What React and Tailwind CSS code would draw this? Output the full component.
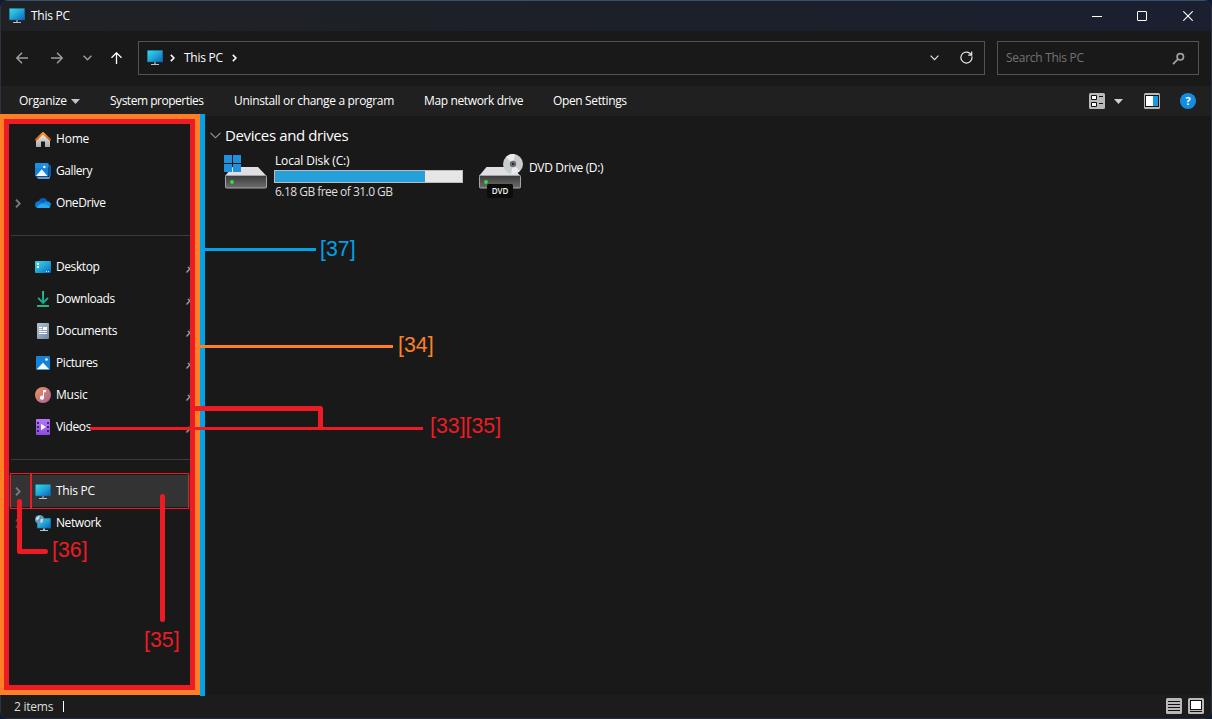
import React from 'react';

function MonitorIcon({ className = '' }) {
  return (
    <svg width="16" height="16" viewBox="0 0 16 16" className={`shrink-0 ${className}`}>
      <defs>
        <linearGradient id="screen" x1="0" y1="0" x2="1" y2="1">
          <stop offset="0" stopColor="#37dbe6" />
          <stop offset="0.5" stopColor="#22a6d6" />
          <stop offset="1" stopColor="#0a66c2" />
        </linearGradient>
      </defs>
      <rect x="7" y="12" width="2" height="2" fill="#7d8a93" />
      <rect x="4" y="14" width="8" height="1" fill="#b9c2c9" />
      <rect x="0" y="0" width="16" height="12.3" rx="0.6" fill="#145f86" />
      <rect x="0.7" y="0.7" width="14.6" height="11" fill="url(#screen)" />
    </svg>
  );
}

function HomeIcon() {
  return (
    <svg width="16" height="16" viewBox="0 0 16 16" className="shrink-0">
      <defs>
        <linearGradient id="wall" x1="0" y1="0" x2="0" y2="1">
          <stop offset="0" stopColor="#eeeeee" />
          <stop offset="1" stopColor="#a9a9a9" />
        </linearGradient>
        <linearGradient id="roof" x1="0" y1="0" x2="0" y2="1">
          <stop offset="0" stopColor="#ff9a1f" />
          <stop offset="1" stopColor="#d9560c" />
        </linearGradient>
      </defs>
      <path d="M1 8 8 2l7 6v8H10v-5.500H6V16H1z" fill="url(#wall)" />
      <path d="M1 8.700 8 2l7 6.700" fill="none" stroke="url(#roof)" strokeWidth="2.100" strokeLinecap="round" strokeLinejoin="round" />
    </svg>
  );
}

function GalleryIcon() {
  return (
    <svg width="16" height="16" viewBox="0 0 16 16" className="shrink-0">
      <path d="M14 2h1.200q.8 0 .8.8V12q0 2-2 2V2z" fill="#0c5cad" />
      <path d="M2 14h12v-1l1 1q0 2-1.500 2H4q-2 0-2-2z" fill="#5f9ad8" />
      <rect x="0" y="0" width="13.500" height="13.500" rx="1.200" fill="#1483d6" />
      <rect x="0" y="0" width="13.500" height="5" rx="1.200" fill="#1a90e2" />
      <path d="M1 13 6.700 6.300 12.500 13z" fill="#f3f8fd" />
      <circle cx="9.300" cy="4" r="1.200" fill="#fff" />
    </svg>
  );
}

function OneDriveIcon() {
  return (
    <svg width="16" height="16" viewBox="0 0 16 16" className="shrink-0">
      <path d="M3.500 7C4.200 4 6 3 8 3c2.500 0 4 1.500 4.500 4L8 10z" fill="#0a5fb4" />
      <path d="M3.500 6.200C1.200 6.300 0 8 0 9.700 0 12 1.500 13 3.500 13H8L9 8.500C7 6.800 5.500 6.200 3.500 6.200z" fill="#0f78d4" />
      <path d="M12.500 6.500c2 .2 3.500 1.600 3.500 3.500l-3 2-5-3.800c1.200-1.200 2.500-1.800 4.500-1.700z" fill="#1490df" />
      <path d="M1.500 12.300C3 10 6 8.500 8.500 8.300L15.500 11.500C15 12.500 14.200 13 13 13H3.500q-1.200 0-2-.7z" fill="#2aa8ec" />
    </svg>
  );
}

function DesktopIcon() {
  return (
    <svg width="16" height="16" viewBox="0 0 16 16" className="shrink-0">
      <rect x="0" y="2" width="16" height="12" rx="1" fill="url(#screen)" />
      <path d="M2 4h2v2H2zM2 7h2v2H2z" fill="#fff" />
      <path d="M11 12h1v1h-1zM13 12h1v1h-1z" fill="#cfe8f7" />
    </svg>
  );
}

function DownloadIcon() {
  return (
    <svg width="16" height="16" viewBox="0 0 16 16" className="shrink-0">
      <defs>
        <linearGradient id="down" x1="0" y1="0" x2="0" y2="1">
          <stop offset="0" stopColor="#2bc486" />
          <stop offset="1" stopColor="#14a398" />
        </linearGradient>
      </defs>
      <path d="M7.100 0h1.900v9.600l3.300-3.300 1.300 1.300L8.050 13.200 2.500 7.600l1.300-1.300 3.300 3.300z" fill="url(#down)" />
      <rect x="2" y="14" width="12" height="2" rx="0.500" fill="#1fb688" />
    </svg>
  );
}

function DocumentIcon() {
  return (
    <svg width="16" height="16" viewBox="0 0 16 16" className="shrink-0">
      <defs>
        <linearGradient id="page" x1="0" y1="0" x2="1" y2="1">
          <stop offset="0" stopColor="#b4c3d4" />
          <stop offset="1" stopColor="#6f87a3" />
        </linearGradient>
      </defs>
      <rect x="2" y="0" width="12" height="16" rx="1" fill="url(#page)" />
      <path d="M4 4h3v1H4zM4 6h3v1H4zM8 4h4v3H8zM4 8h8v1H4zM4 10h8v1H4z" fill="#fff" />
    </svg>
  );
}

function PictureIcon() {
  return (
    <svg width="16" height="16" viewBox="0 0 16 16" className="shrink-0">
      <rect x="1" y="1" width="14" height="14" rx="1" fill="#1482d8" />
      <path d="M1.800 14.200 8 7.800l6.200 6.400z" fill="#f2f7fc" />
      <circle cx="11.500" cy="4.500" r="1.300" fill="#fff" />
    </svg>
  );
}

function MusicIcon() {
  return (
    <svg width="16" height="16" viewBox="0 0 16 16" className="shrink-0">
      <defs>
        <linearGradient id="disc" x1="0" y1="0" x2="1" y2="1">
          <stop offset="0" stopColor="#f0955a" />
          <stop offset="1" stopColor="#a85f9c" />
        </linearGradient>
      </defs>
      <circle cx="8" cy="8" r="8" fill="url(#disc)" />
      <path d="M8 3h3v2.200H9V10.800A2 2 0 1 1 8 9z" fill="#fff" />
    </svg>
  );
}

function VideoIcon() {
  return (
    <svg width="16" height="16" viewBox="0 0 16 16" className="shrink-0">
      <defs>
        <linearGradient id="film" x1="0" y1="0" x2="0" y2="1">
          <stop offset="0" stopColor="#b57af5" />
          <stop offset="1" stopColor="#8a4be0" />
        </linearGradient>
      </defs>
      <rect x="1" y="0" width="14" height="16" rx="1" fill="url(#film)" />
      <path d="M2 3h2v2H2zM2 7h2v2H2zM2 11h2v2H2zM12 3h2v2h-2zM12 7h2v2h-2zM12 11h2v2h-2z" fill="#43206f" />
      <path d="M6 4.800 11 8l-5 3.200z" fill="#fff" />
    </svg>
  );
}

function NetworkIcon() {
  return (
    <svg width="16" height="16" viewBox="0 0 16 16" className="shrink-0">
      <rect x="2" y="3" width="14" height="10.500" fill="#145f86" />
      <rect x="2.600" y="3.600" width="12.800" height="9.300" fill="url(#screen)" />
      <path d="M8 13.500h2V15H8zM5 15h8v1H5z" fill="#b9c2c9" />
      <circle cx="4.600" cy="4.600" r="4.600" fill="#5d9cbd" />
      <path d="M1 3.500Q2.500.8 4.800.9L4 3.500 2 5.500zM5.500 4.500 8 3.500 7.500 7 5.500 8z" fill="#d3e8f1" />
    </svg>
  );
}

function Chevron({ className = '' }) {
  return (
    <svg width="6" height="9" viewBox="0 0 6 9" className={className} fill="none" stroke="currentColor" strokeWidth="1.900">
      <path d="M1 0.700 4.700 4.500 1 8.300" />
    </svg>
  );
}

function Pin() {
  return (
    <svg width="5" height="10" viewBox="0 0 5 10" className="mt-[3px] ml-auto shrink-0" fill="none" stroke="#a0a0a0">
      <path d="M1.800 3 5 5.500M4.500 1V6M3.500 5.300 0.500 8.500" strokeWidth="1.300" />
    </svg>
  );
}

function NavRow({ icon, label, arrow, pin, dim, tracking = 'tracking-[-0.42px]' }) {
  return (
    <div className="flex h-8 items-center pr-[4px]">
      <div className={`flex w-[26px] shrink-0 pl-[6px] ${dim ? 'text-[#4d4d4d]' : 'text-[#7a7a7a]'}`}>{arrow && <Chevron />}</div>
      {icon}
      <span className={`ml-[5px] whitespace-nowrap leading-4 ${tracking}`}>{label}</span>
      {pin && <Pin />}
    </div>
  );
}

function Separator() {
  return (
    <div className="flex h-8 items-center pl-[2px]">
      <div className="h-px w-full bg-[#3b3b3b]" />
    </div>
  );
}

function TitleBar() {
  return (
    <header className="flex h-[31px] items-center border-t border-[#33506f] bg-gradient-to-r from-[#202124] via-[#1c2029] to-[#1a2030] pl-[8px]">
      <MonitorIcon />
      <span className="ml-[6px] leading-4 tracking-[-0.25px]">This PC</span>
      <div className="ml-auto flex">
        <div className="flex w-[45px] items-center justify-center">
          <svg width="10" height="10" viewBox="0 0 10 10"><path d="M0 5.500h10" stroke="#fff" /></svg>
        </div>
        <div className="flex w-[46px] items-center justify-center">
          <svg width="10" height="10" viewBox="0 0 10 10"><rect x=".5" y=".5" width="9" height="9" rx="0.500" fill="none" stroke="#fff" /></svg>
        </div>
        <div className="flex w-[46px] items-center justify-center">
          <svg width="10" height="10" viewBox="0 0 10 10"><path d="M.3.300 9.700 9.700M9.700.3.300 9.700" stroke="#fff" strokeWidth="1.100" /></svg>
        </div>
      </div>
    </header>
  );
}

function NavBar() {
  return (
    <nav className="flex h-[55px] items-center bg-[#191919] pr-[12px] pb-[2px] pl-[15px]">
      <svg width="12" height="12" viewBox="0 0 12 12" fill="none" stroke="#9c9c9c" strokeWidth="1.500"><path d="M12 6H.8M6 .7.800 6 6 11.300" /></svg>
      <svg width="12" height="12" viewBox="0 0 12 12" fill="none" stroke="#9c9c9c" strokeWidth="1.500" className="ml-[23px]"><path d="M0 6h11.200M6 .7 11.200 6 6 11.300" /></svg>
      <svg width="9" height="6" viewBox="0 0 9 6" fill="none" stroke="#9c9c9c" strokeWidth="1.500" className="ml-[20px]"><path d="M.6.700 4.500 4.700 8.400.7" /></svg>
      <svg width="12" height="12" viewBox="0 0 12 12" fill="none" stroke="#fff" strokeWidth="1.300" className="ml-[19px]"><path d="M5.500 12V.8M.5 5.700 5.500.8 10.500 5.700" /></svg>
      <div className="ml-[15px] flex h-[34px] w-[847px] items-center border border-[#535353] pr-[11px] pl-[8px]">
        <MonitorIcon />
        <Chevron className="ml-[7px] h-[8px] w-[5px]" />
        <span className="ml-[9px] leading-4 tracking-[-0.25px]">This PC</span>
        <Chevron className="ml-[9px] h-[8px] w-[5px]" />
        <svg width="9" height="6" viewBox="0 0 9 6" fill="none" stroke="#e6e6e6" strokeWidth="1.200" className="ml-auto"><path d="M.6.700 4.500 4.700 8.400.7" /></svg>
        <svg width="13" height="13" viewBox="0 0 13 13" fill="none" stroke="#e6e6e6" strokeWidth="1.200" className="ml-[21px]"><path d="M11.800 5.300A5.500 5.500 0 1 1 9.800 2.200L11.500 3.800M11.700.500v3.600H8.200" /></svg>
      </div>
      <div className="ml-[12px] flex h-[34px] flex-1 items-center border border-[#535353] pr-[13px] pl-[8px]">
        <span className="leading-4 tracking-[-0.28px] text-[#737373]">Search This PC</span>
        <svg width="13" height="13" viewBox="0 0 13 13" fill="none" stroke="#a0a0a0" strokeWidth="1.700" className="mt-[2px] ml-auto"><circle cx="8.300" cy="4.800" r="3.200" /><path d="M6 7.200 1 12.200" /></svg>
      </div>
    </nav>
  );
}

function Toolbar() {
  return (
    <div className="flex h-[30px] items-center bg-[#202020] pl-[18px] pr-[15px] whitespace-nowrap leading-4">
      <span className="w-[48px] tracking-[-0.3px]">Organize</span>
      <svg width="9" height="5" viewBox="0 0 9 5" className="ml-[4px]"><path d="M0 0h9L4.500 5z" fill="#c4c4c4" /></svg>
      <span className="ml-[30px] w-[124px] tracking-[-0.48px]">System properties</span>
      <span className="w-[190px] tracking-[-0.33px]">Uninstall or change a program</span>
      <span className="w-[129px] tracking-[-0.36px]">Map network drive</span>
      <span className="tracking-[-0.36px]">Open Settings</span>
      <svg width="16" height="16" viewBox="0 0 16 16" className="ml-auto">
        <rect width="16" height="16" rx="1.500" fill="#b9b9b9" />
        <path d="M2.500 2.500h5v4h-5zM2.500 9.500h5v4h-5z" fill="#fff" stroke="#111" />
        <path d="M10 3.500h4M10 10.500h4" stroke="#111" />
      </svg>
      <svg width="9" height="5" viewBox="0 0 9 5" className="ml-[9px]"><path d="M0 0h9L4.500 5z" fill="#d0d0d0" /></svg>
      <svg width="16" height="16" viewBox="0 0 16 16" className="ml-[21px]">
        <rect width="16" height="16" rx="1.500" fill="#b9b9b9" />
        <rect x="1.500" y="2.500" width="13" height="11" fill="#fff" stroke="#111" />
        <rect x="9" y="3" width="5" height="10" fill="#159be0" />
      </svg>
      <div className="ml-[20px] flex h-4 w-4 items-center justify-center rounded-full bg-[#128ddf] text-[11px] font-bold">?</div>
    </div>
  );
}

function Sidebar() {
  return (
    <aside className="flex w-[194px] shrink-0 flex-col pt-[7px] pl-[8px]">
      <NavRow icon={<HomeIcon />} label="Home" tracking="tracking-[-0.2px]" />
      <NavRow icon={<GalleryIcon />} label="Gallery" />
      <NavRow icon={<OneDriveIcon />} label="OneDrive" arrow />
      <Separator />
      <NavRow icon={<DesktopIcon />} label="Desktop" pin />
      <NavRow icon={<DownloadIcon />} label="Downloads" pin />
      <NavRow icon={<DocumentIcon />} label="Documents" pin tracking="tracking-[-0.36px]" />
      <NavRow icon={<PictureIcon />} label="Pictures" pin />
      <NavRow icon={<MusicIcon />} label="Music" pin tracking="tracking-[-0.2px]" />
      <NavRow icon={<VideoIcon />} label="Videos" pin tracking="tracking-[-0.36px]" />
      <Separator />
      <div className="bg-[#333333]">
        <NavRow icon={<MonitorIcon className="translate-y-px" />} label="This PC" arrow tracking="tracking-[-0.25px]" />
      </div>
      <NavRow icon={<NetworkIcon />} label="Network" arrow dim />
    </aside>
  );
}

function DriveBody() {
  return (
    <>
      <defs>
        <linearGradient id="front" x1="0" y1="0" x2="0" y2="1">
          <stop offset="0" stopColor="#3a3a3a" />
          <stop offset="1" stopColor="#6e6e6e" />
        </linearGradient>
      </defs>
      <path d="M8.500 12h25.500L42.500 21H1z" fill="#dfdfe3" />
      <rect x="1.500" y="20.500" width="41" height="12.500" rx="1" fill="url(#front)" stroke="#a5a5a5" />
      <circle cx="8" cy="27" r="1.900" fill="#2fe03a" />
    </>
  );
}

function Content() {
  return (
    <main className="flex-1 pl-[15px] pt-[9px]">
      <div className="flex h-[20px] items-center">
        <svg width="11" height="7" viewBox="0 0 11 7" fill="none" stroke="#9a9a9a" strokeWidth="1.100"><path d="M.5.800 5.500 5.800 10.500.8" /></svg>
        <span className="ml-[4px] text-[15px] leading-5 tracking-[-0.38px]">Devices and drives</span>
      </div>
      <div className="flex pt-[7px]">
        <div className="flex w-[268px] shrink-0 pl-[14px]">
          <svg width="45" height="48" viewBox="0 0 45 48" className="shrink-0">
            <g transform="translate(0 3)"><DriveBody /></g>
            <path d="M0 3h8v8H0zM9 3h8v8H9zM0 12h8v8H0zM9 12h8v8H9z" fill="#1e90dc" />
          </svg>
          <div className="ml-[5px] flex flex-col whitespace-nowrap">
            <span className="ml-px mt-px h-4 leading-4 tracking-[-0.15px]">Local Disk (C:)</span>
            <div className="mt-px h-[13px] w-[189px] border border-[#bcbcbc] bg-[#e6e6e6]">
              <div className="h-full w-[150px] bg-[#26a0da]" />
            </div>
            <span className="ml-px mt-px leading-4 tracking-[-0.53px] text-[#dedede]">6.18 GB free of 31.0 GB</span>
          </div>
        </div>
        <svg width="48" height="48" viewBox="0 0 48 48" className="shrink-0">
          <g transform="translate(0 3)"><DriveBody /></g>
          <circle cx="35" cy="12" r="10" fill="#c9ccce" />
          <path d="M35 12 28 5A10 10 0 0 1 37 2.200zM35 12l7 7a10 10 0 0 1-9 2.800z" fill="#e9ebec" />
          <circle cx="35" cy="12" r="3.200" fill="#6c7074" />
          <circle cx="35" cy="12" r="1.300" fill="#2b2d2f" />
          <rect x="9" y="32" width="26" height="14" rx="1.500" fill="#0c0c0c" />
          <text x="22" y="42" fill="#f2f2f2" fontSize="8" fontWeight="600" textAnchor="middle">DVD</text>
        </svg>
        <span className="ml-[3px] mt-[8px] leading-4 tracking-[-0.35px]">DVD Drive (D:)</span>
      </div>
    </main>
  );
}

function StatusBar() {
  return (
    <footer className="flex h-[24px] items-center border-b border-[#252c38] bg-[#1c1c1c] pl-[13px] pr-[7px] text-[#dedede]">
      <span className="w-[39px] leading-4 tracking-[-0.25px] whitespace-nowrap">2 items</span>
      <div className="ml-[10px] h-[11px] w-px bg-white" />
      <svg width="16" height="16" viewBox="0 0 16 16" className="-mt-px ml-auto">
        <rect width="16" height="16" rx="1.500" fill="#b9b9b9" />
        <path d="M2 3.500h12M2 6.500h12M2 9.500h12M2 12.500h12" stroke="#111" />
      </svg>
      <svg width="16" height="16" viewBox="0 0 16 16" className="-mt-px ml-[6px]">
        <rect width="16" height="16" rx="1.500" fill="#b9b9b9" />
        <rect x="2.500" y="2.500" width="11" height="9" fill="#fff" stroke="#111" />
        <path d="M2 13.500h12" stroke="#111" />
      </svg>
    </footer>
  );
}

function Annotations() {
  const label = "absolute font-['Liberation_Sans',sans-serif] text-[21.333px] leading-6";
  return (
    <div className="pointer-events-none absolute inset-0">
      <svg width="1212" height="719" viewBox="0 0 1212 719" fill="none" className="absolute inset-0">
        <path d="M202.500 114v582" stroke="#00a2e8" strokeWidth="5" />
        <path d="M203 249.500h113" stroke="#00a2e8" strokeWidth="3" />
        <rect x="1.500" y="116.500" width="196" height="576" stroke="#ff7f27" strokeWidth="5" />
        <path d="M198 346.500h195" stroke="#ff7f27" strokeWidth="3" />
        <rect x="6.500" y="121.500" width="186" height="566" stroke="#ed1c24" strokeWidth="5" />
        <path d="M193 408.500h127.500V428" stroke="#ed1c24" strokeWidth="5" strokeLinejoin="round" />
        <path d="M90 428.500h333" stroke="#ed1c24" strokeWidth="3" />
        <rect x="10.500" y="473.500" width="178" height="35" stroke="#ed1c24" />
        <path d="M31 473v36" stroke="#ed1c24" strokeWidth="2" />
        <path d="M19.500 501.500v50H45.500M162.500 496.500v123" stroke="#ed1c24" strokeWidth="5" strokeLinecap="round" strokeLinejoin="round" />
      </svg>
      <span className={`${label} left-[320px] top-[237px] text-[#00a2e8]`}>[37]</span>
      <span className={`${label} left-[398px] top-[333px] text-[#ff7f27]`}>[34]</span>
      <span className={`${label} left-[430px] top-[414px] text-[#ed1c24]`}>[33][35]</span>
      <span className={`${label} left-[52px] top-[538px] text-[#ed1c24]`}>[36]</span>
      <span className={`${label} left-[144px] top-[628px] text-[#ed1c24]`}>[35]</span>
    </div>
  );
}

export default function App() {
  return (
    <div className="relative h-[719px] w-[1212px] overflow-hidden bg-[#0d1a38] font-['Open_Sans','Noto_Sans',sans-serif] text-[12px] text-white">
      <div className="flex h-full flex-col overflow-hidden rounded-lg border-x border-[#2b3340] bg-[#191919]">
        <TitleBar />
        <NavBar />
        <Toolbar />
        <div className="flex min-h-0 flex-1">
          <Sidebar />
          <Content />
        </div>
        <StatusBar />
      </div>
      <Annotations />
    </div>
  );
}
